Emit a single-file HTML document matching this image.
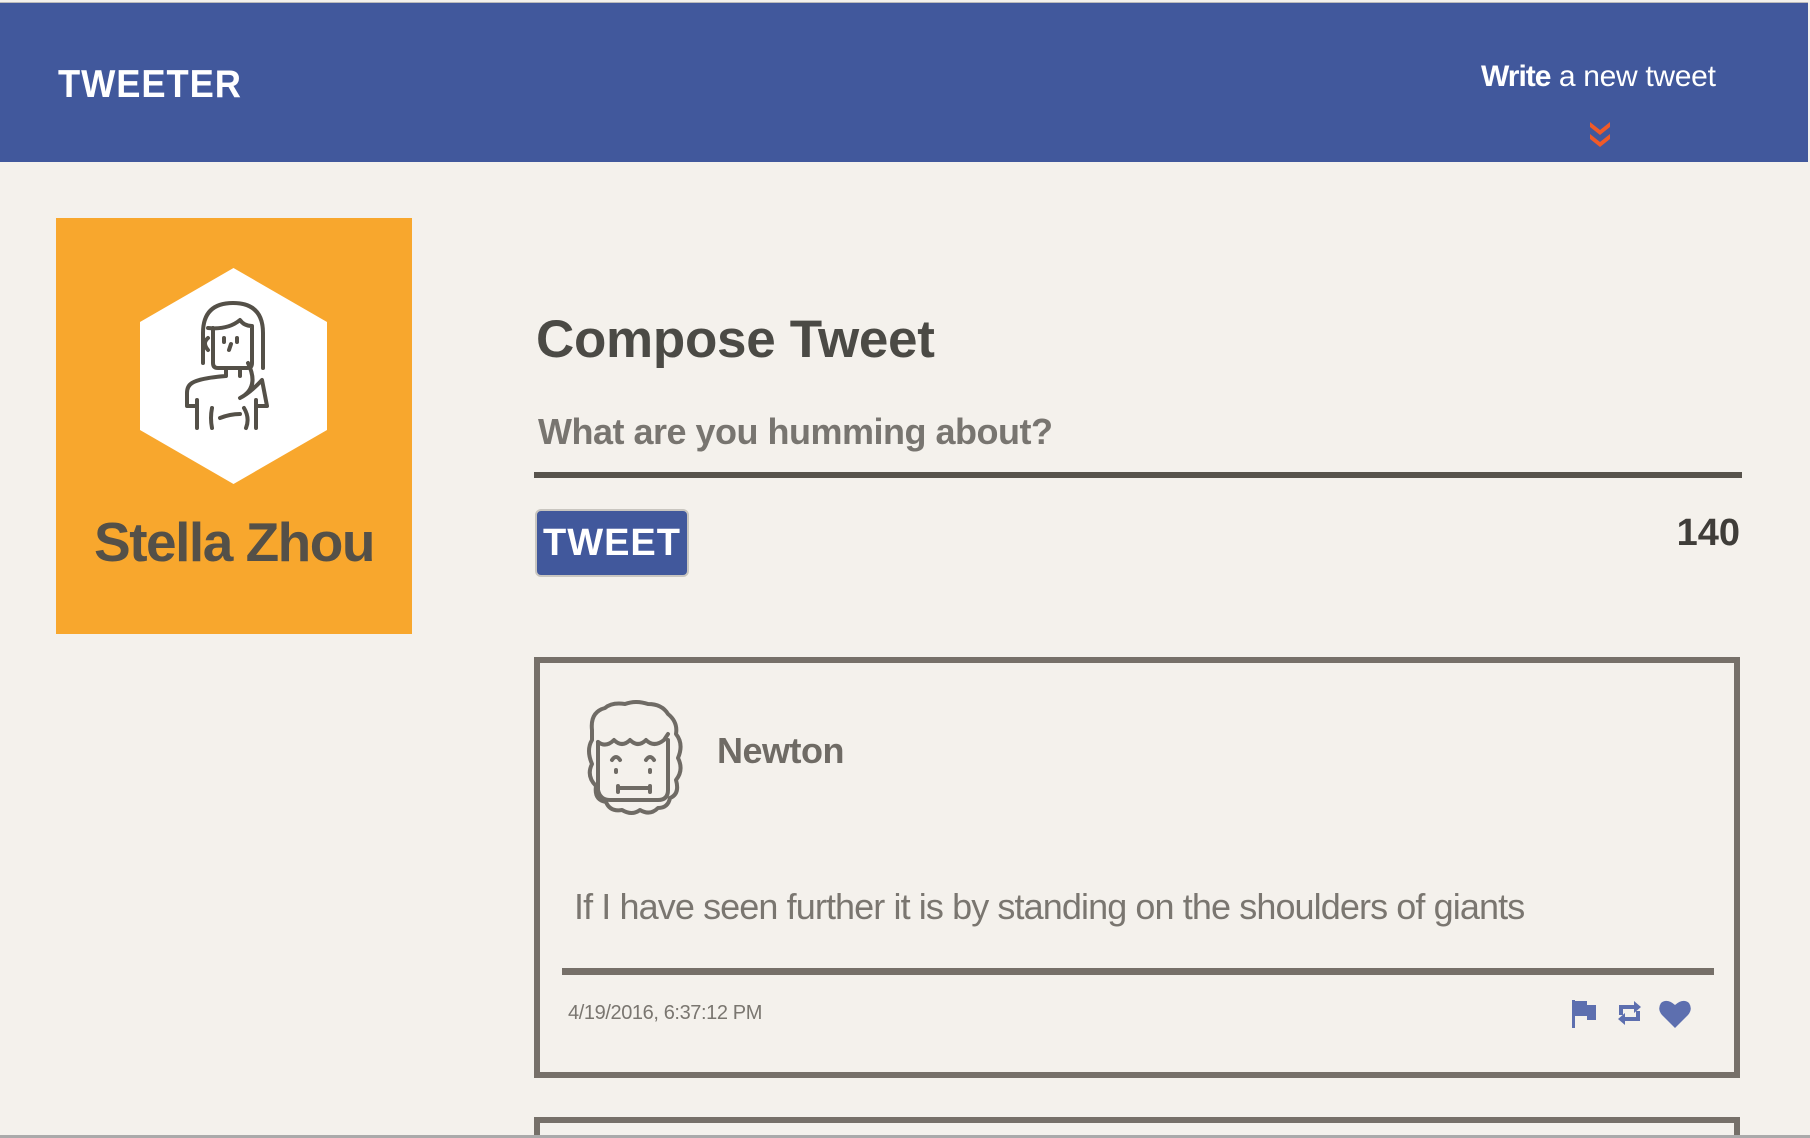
<!DOCTYPE html>
<html><head><meta charset="utf-8"><style>
*{margin:0;padding:0;box-sizing:border-box}
html,body{width:1810px;height:1138px;overflow:hidden;background:#f4f1ec;font-family:"Liberation Sans",sans-serif;position:relative}
.abs{position:absolute}
#hdr{left:0;top:2px;width:1808px;height:160px;background:#41589c;border-top:1px solid #bbb}
.logo{left:58px;top:63px;font-size:39px;font-weight:900;color:#fff;letter-spacing:1px;transform:scaleX(0.93);transform-origin:left}
.write{left:1481px;top:60px;font-size:30px;color:#fff;white-space:nowrap}
.write b{font-weight:bold;letter-spacing:-1px}
.write span{font-weight:normal;letter-spacing:-0.3px}
.card{left:56px;top:218px;width:356px;height:416px;background:#f8a72d}
.name{left:56px;top:510px;width:356px;text-align:center;font-size:55px;font-weight:bold;color:#545048;letter-spacing:-1.5px}
h1{position:absolute;left:536px;top:309px;font-size:53px;font-weight:bold;color:#4b4a45;letter-spacing:-0.3px}
.hum{left:538px;top:411px;font-size:36px;font-weight:bold;color:#787570;letter-spacing:-0.5px}
.line1{left:534px;top:472px;width:1208px;height:6px;background:#57534c}
.btn{left:535px;top:509px;width:154px;height:68px;background:#41589c;border:2px solid #c9c6c0;border-radius:6px;color:#fff;font-size:38px;font-weight:900;text-align:center;line-height:64px;letter-spacing:1px}
.cnt{left:1640px;top:512px;width:100px;text-align:right;font-size:38px;font-weight:900;color:#3f3d39}
.box{left:534px;top:657px;width:1206px;height:421px;border:6px solid #767069}
.box2{left:534px;top:1117px;width:1206px;height:60px;border:6px solid #767069}
.newton{left:717px;top:730px;font-size:36px;font-weight:bold;color:#6f6b65;letter-spacing:-0.5px}
.txt{left:574px;top:886px;font-size:36px;color:#7a7670;letter-spacing:-0.9px;font-weight:300}
.line2{left:562px;top:968px;width:1152px;height:7px;background:#767069}
.date{left:568px;top:1002px;font-size:20px;color:#7a7670;letter-spacing:-0.4px}
.bot{left:0;top:1135px;width:1810px;height:3px;background:#aaa}
</style></head><body>
<div id="hdr" class="abs"></div>
<div class="abs logo">TWEETER</div>
<div class="abs write"><b>Write</b> <span>a new tweet</span></div>
<svg class="abs" style="left:1588px;top:120px" width="24" height="30" viewBox="0 0 24 30"><path d="M2 2 L12 10 L22 2 L22 7 L12 15 L2 7Z M2 14 L12 22 L22 14 L22 19 L12 27 L2 19Z" fill="#f05a28"/></svg>

<div class="abs card"></div>
<svg class="abs" style="left:140px;top:268px" width="187" height="216" viewBox="0 0 187 216">
<polygon points="93.5,0 187,54 187,162 93.5,216 0,162 0,54" fill="#fff"/>
<g fill="none" stroke="#545048" stroke-width="4" stroke-linecap="round" stroke-linejoin="round">
<path d="M63 95 V65 Q63 35 93 35 Q123 35 123 65 V100"/>
<path d="M68 60 Q88 62 100 52 Q104 58 112 58 V95 Q112 100 107 100 H78 Q73 100 73 95 V60"/>
<path d="M68 70 Q62 75 68 82"/>
<path d="M86 100 V108 Q60 110 52 115 Q47 118 47 125 V138 H57"/>
<path d="M100 100 V108"/>
<path d="M108 95 Q120 120 100 130 Q110 125 122 112 L127 138 H116"/>
<path d="M57 132 V160 M116 132 V160 M72 140 Q70 150 72 160 M104 140 Q110 150 106 160 M80 150 Q90 146 100 146"/>
<path d="M84 70 V74 M97 70 V74 M91 76 L89 82"/>
</g></svg>
<div class="abs name">Stella Zhou</div>

<h1>Compose Tweet</h1>
<div class="abs hum">What are you humming about?</div>
<div class="abs line1"></div>
<div class="abs btn">TWEET</div>
<div class="abs cnt">140</div>

<div class="abs box"></div>
<svg class="abs" style="left:580px;top:700px" width="112" height="116" viewBox="0 0 112 116">
<g fill="none" stroke="#6f6b65" stroke-width="4" stroke-linecap="round" stroke-linejoin="round">
<path d="M12 30 Q10 12 25 8 Q32 2 45 4 Q56 0 68 4 Q82 4 88 14 Q98 22 96 34 Q104 44 98 58 Q104 70 96 80 Q100 94 90 98 Q88 108 78 108 Q70 116 60 110 Q52 116 42 110 Q30 112 26 102 Q14 100 16 86 Q6 76 12 64 Q6 50 12 40 Z"/>
<path d="M18 42 Q26 48 34 40 Q42 48 50 40 Q58 48 66 40 Q74 48 84 40 L88 34"/>
<path d="M18 42 V90 Q20 100 30 100 H78 Q88 100 88 90 V40"/>
<path d="M32 60 Q36 54 40 60 M66 60 Q70 54 74 60"/>
<path d="M36 70 V72 M70 70 V72 M38 86 V92 M70 86 V92 M38 88 H70"/>
</g></svg>
<div class="abs newton">Newton</div>
<div class="abs txt">If I have seen further it is by standing on the shoulders of giants</div>
<div class="abs line2"></div>
<div class="abs date">4/19/2016, 6:37:12 PM</div>
<svg class="abs" style="left:1570px;top:998px" width="124" height="32" viewBox="0 0 124 32">
<g fill="#5d6faf">
<rect x="2" y="2" width="3" height="28"/>
<path d="M5 3 H17 L17 7 H26 V22 H17 V18 H5Z"/>
<path d="M49 7 H64 V3 L71 9 L64 15 V11 H53 V17 H49Z"/>
<path d="M70 23 H55 V27 L48 21 L55 15 V19 H66 V13 H70Z"/>
<path d="M105 30 L92 17 Q87 11 91 5 Q97 0 105 7 Q113 0 119 5 Q123 11 118 17Z"/>
</g></svg>
<div class="abs box2"></div>
<div class="abs bot"></div>
</body></html>
